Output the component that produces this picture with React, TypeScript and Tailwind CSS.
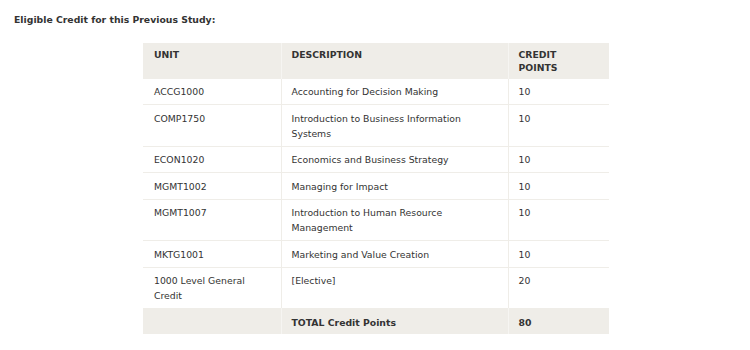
const rows: [string, string, string][] = [
  ["ACCG1000", "Accounting for Decision Making", "10"],
  ["COMP1750", "Introduction to Business Information Systems", "10"],
  ["ECON1020", "Economics and Business Strategy", "10"],
  ["MGMT1002", "Managing for Impact", "10"],
  ["MGMT1007", "Introduction to Human Resource Management", "10"],
  ["MKTG1001", "Marketing and Value Creation", "10"],
  ["1000 Level General Credit", "[Elective]", "20"],
];

export default function App() {
  return (
    <div className="w-[750px] h-[350px] bg-white text-[#333] font-['DejaVu_Sans',sans-serif] overflow-hidden">
      <p className="pl-[14px] pt-[14px] text-[9.3px] font-bold leading-[12px]">
        Eligible Credit for this Previous Study:
      </p>
      <table className="ml-[143px] mt-[17px] w-[466px] table-fixed border-collapse text-[9.3px]">
        <colgroup>
          <col className="w-[138px]" />
          <col className="w-[227px]" />
          <col className="w-[101px]" />
        </colgroup>
        <thead>
          <tr className="bg-[#efede8] h-[35px] align-top font-bold">
            <th className="pl-[11px] pr-2 pt-[5px] text-left leading-[13px]">UNIT</th>
            <th className="pl-[10px] pr-2 pt-[5px] text-left leading-[13px] border-l border-[#f6f5f2]">DESCRIPTION</th>
            <th className="pl-[10px] pr-2 pt-[5px] text-left leading-[13px] border-l border-[#f6f5f2]">
              CREDIT
              <br />
              POINTS
            </th>
          </tr>
        </thead>
        <tbody>
          {rows.map(([unit, desc, pts]) => (
            <tr key={unit} className="align-top border-t border-[#efede8]">
              <td className="pl-[11px] pr-4 pt-[5.5px] pb-[5px] leading-[15px]">{unit}</td>
              <td className="pl-[10px] pr-4 pt-[5.5px] pb-[5px] leading-[15px] border-l border-[#efede8]">{desc}</td>
              <td className="pl-[10px] pr-2 pt-[5.5px] pb-[5px] leading-[15px] border-l border-[#efede8]">{pts}</td>
            </tr>
          ))}
          <tr className="bg-[#efede8] font-bold align-top">
            <td className="h-[26px]"></td>
            <td className="pl-[10px] pt-[7px] leading-[15px] border-l border-[#f6f5f2]">TOTAL Credit Points</td>
            <td className="pl-[10px] pt-[7px] leading-[15px] border-l border-[#f6f5f2]">80</td>
          </tr>
        </tbody>
      </table>
    </div>
  );
}
